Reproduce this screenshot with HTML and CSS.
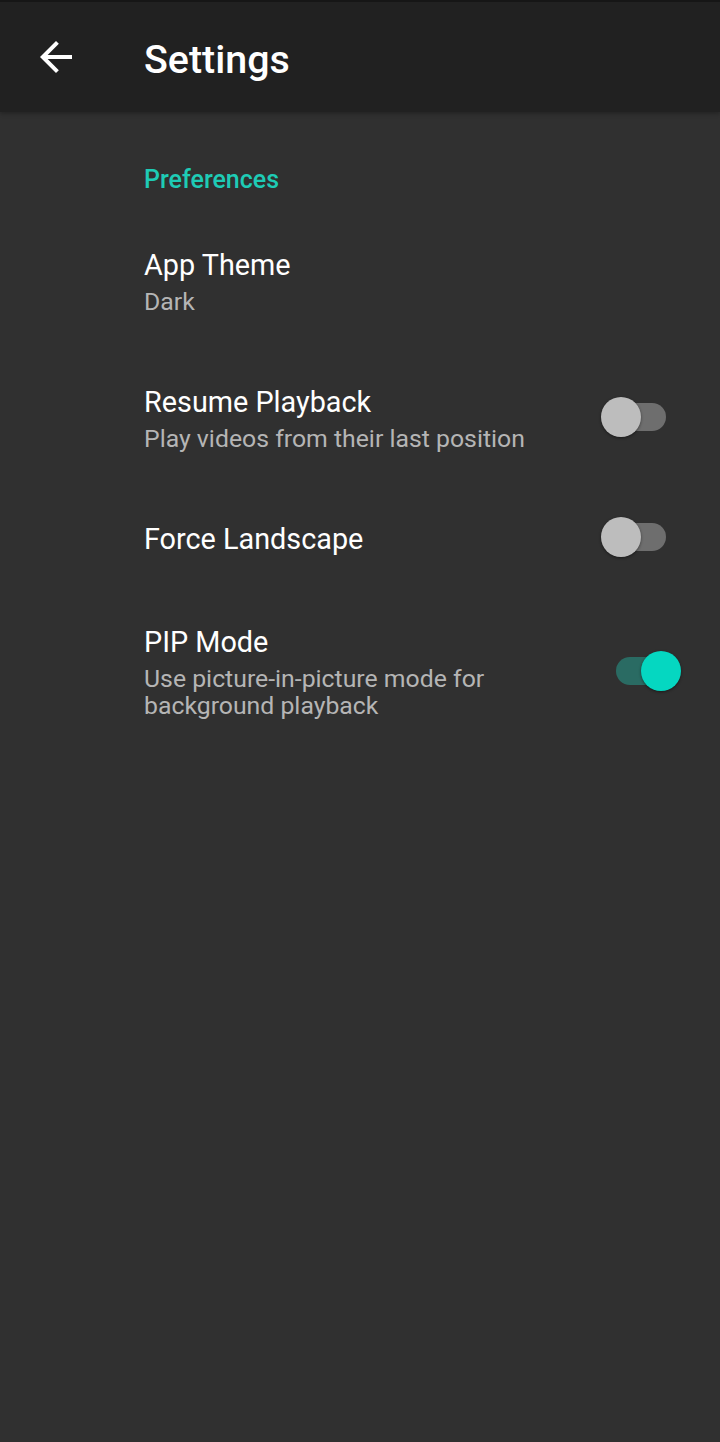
FILE: index.html
```html
<!DOCTYPE html>
<html>
<head>
<meta charset="utf-8">
<link rel="stylesheet" href="styles.css">
</head>
<body>
<header class="toolbar">
  <span class="back">
    <svg width="48" height="48" viewBox="0 0 24 24"><path fill="#fff" d="M20 11H7.83l5.59-5.59L12 4l-8 8 8 8 1.41-1.41L7.83 13H20v-2z"/></svg>
  </span>
  <h1 class="title">Settings</h1>
</header>
<main class="content">
  <div class="category">Preferences</div>
  <div class="row">
    <div class="texts">
      <div class="row-title">App Theme</div>
      <div class="row-summary">Dark</div>
    </div>
  </div>
  <div class="row">
    <div class="texts">
      <div class="row-title">Resume Playback</div>
      <div class="row-summary">Play videos from their last position</div>
    </div>
    <div class="switch off"><span class="track"></span><span class="thumb"></span></div>
  </div>
  <div class="row">
    <div class="texts">
      <div class="row-title">Force Landscape</div>
    </div>
    <div class="switch off"><span class="track"></span><span class="thumb"></span></div>
  </div>
  <div class="row">
    <div class="texts">
      <div class="row-title">PIP Mode</div>
      <div class="row-summary">Use picture-in-picture mode for background playback</div>
    </div>
    <div class="switch on"><span class="track"></span><span class="thumb"></span></div>
  </div>
</main>
</body>
</html>
```
FILE: styles.css
```css
html, body {
  margin: 0;
  padding: 0;
  background: #303030;
  font-family: Roboto, "Noto Sans", sans-serif;
  color: #ffffff;
}
body {
  width: 720px;
  height: 1442px;
  overflow: hidden;
}
.toolbar {
  height: 112px;
  box-sizing: border-box;
  background: #212121;
  border-top: 2px solid #161616;
  display: flex;
  align-items: flex-start;
  box-shadow: 0 2px 4px rgba(0,0,0,0.25);
  position: relative;
}
.back {
  display: block;
  width: 48px;
  height: 48px;
  margin-left: 32px;
  margin-top: 31px;
}
.back svg { display: block; }
.title {
  margin: 0 0 0 64px;
  padding-top: 35px;
  font-size: 39.4px;
  line-height: 46px;
  font-weight: 500;
  color: #ffffff;
}
.content {
  padding-left: 144px;
}
.category {
  padding-top: 53px;
  padding-bottom: 19px;
  font-size: 25px;
  line-height: 30px;
  font-weight: 500;
  color: #1ecbb5;
}
.row {
  display: flex;
  align-items: center;
  padding: 35px 0 36px 0;
}
.texts {
  flex: 1;
  min-width: 0;
  padding-right: 24px;
}
.row-title {
  font-size: 28.8px;
  line-height: 32px;
  color: #ffffff;
}
.row-summary {
  margin-top: 7px;
  font-size: 24.8px;
  line-height: 27px;
  color: #b5b5b5;
}
.switch {
  position: relative;
  width: 65px;
  height: 40px;
  flex: none;
  margin-top: -8px;
  margin-bottom: -4px;
}
.switch.off {
  margin-right: 54px;
}
.switch.on {
  margin-right: 39px;
}
.track {
  position: absolute;
  top: 6px;
  width: 62px;
  height: 28px;
  border-radius: 14px;
}
.thumb {
  position: absolute;
  top: 0;
  width: 40px;
  height: 40px;
  border-radius: 50%;
  box-shadow: 0 1px 3px rgba(0,0,0,0.45);
}
.off .track { left: 3px; background: #6e6e6e; }
.off .thumb { left: 0; background: #bdbdbd; }
.on .track { left: 0; background: #2a6b63; }
.on .thumb { right: 0; background: #05d7c1; }
```
